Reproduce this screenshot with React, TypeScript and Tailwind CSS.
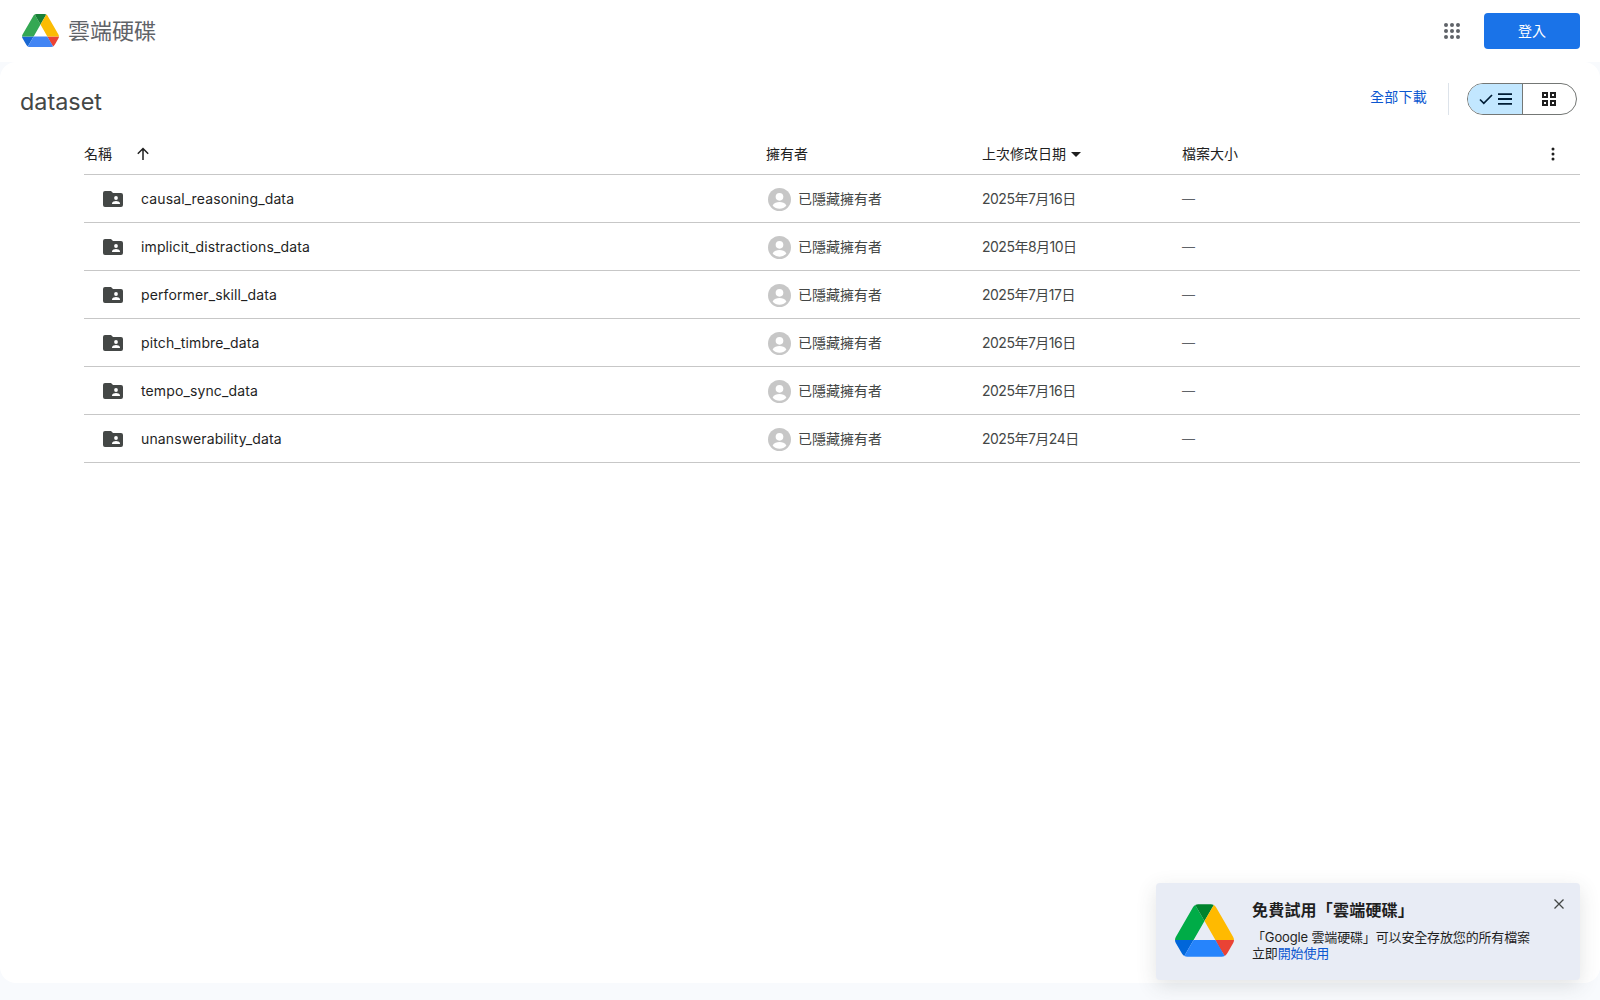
const rows = [
  { name: 'causal_reasoning_data', date: '2025年7月16日' },
  { name: 'implicit_distractions_data', date: '2025年8月10日' },
  { name: 'performer_skill_data', date: '2025年7月17日' },
  { name: 'pitch_timbre_data', date: '2025年7月16日' },
  { name: 'tempo_sync_data', date: '2025年7月16日' },
  { name: 'unanswerability_data', date: '2025年7月24日' },
];

const sans = "font-['Inter','Noto_Sans_CJK_TC',sans-serif]";

const DriveLogo = ({ className, vivid }: { className: string; vivid?: boolean }) => (
  <svg viewBox="0 0 87.3 78" className={className}>
    <path d="m6.6 66.85 3.85 6.65c.8 1.4 1.95 2.5 3.3 3.3l13.75-23.8h-27.5c0 1.55.4 3.1 1.2 4.5z" fill={vivid ? '#0066da' : '#1967d2'} />
    <path d="m43.65 25-13.75-23.8c-1.35.8-2.5 1.9-3.3 3.3l-25.4 44a9.06 9.06 0 0 0 -1.2 4.5h27.5z" fill={vivid ? '#00ac47' : '#34a853'} />
    <path d="m73.55 76.8c1.35-.8 2.5-1.9 3.3-3.3l1.6-2.75 7.65-13.25c.8-1.4 1.2-2.95 1.2-4.5h-27.502l5.852 11.5z" fill="#ea4335" />
    <path d="m43.65 25 13.75-23.8c-1.35-.8-2.9-1.2-4.5-1.2h-18.5c-1.6 0-3.15.45-4.5 1.2z" fill={vivid ? '#00832d' : '#188038'} />
    <path d="m59.8 53h-32.3l-13.75 23.8c1.35.8 2.9 1.2 4.5 1.2h50.8c1.6 0 3.15-.45 4.5-1.2z" fill={vivid ? '#2684fc' : '#4285f4'} />
    <path d="m73.4 26.5-12.7-22c-.8-1.4-1.95-2.5-3.3-3.3l-13.75 23.8 16.15 28h27.45c0-1.55-.4-3.1-1.2-4.5z" fill={vivid ? '#ffba00' : '#fbbc04'} />
  </svg>
);

const AppsIcon = () => (
  <svg viewBox="0 0 16 16" className="w-4 h-4" fill="#5f6368">
    {[2, 8, 14].map((y) =>
      [2, 8, 14].map((x) => <circle key={`${x}-${y}`} cx={x} cy={y} r="2" />)
    )}
  </svg>
);

const SharedFolder = () => (
  <svg viewBox="0 0 20 16" className="w-5 h-4">
    <path d="M2 0h6l2 2h8a2 2 0 0 1 2 2v10a2 2 0 0 1-2 2H2a2 2 0 0 1-2-2V2a2 2 0 0 1 2-2z" fill="#444746" />
    <circle cx="13" cy="7" r="1.9" fill="#fff" />
    <path d="M9 12.4c0-1.5 2.7-2.3 4-2.3s4 .8 4 2.3v.6H9z" fill="#fff" />
  </svg>
);

const Avatar = () => (
  <svg viewBox="0 0 24 24" className="w-[23px] h-[23px] mt-px">
    <circle cx="12" cy="12" r="12" fill="#c7c7c7" />
    <circle cx="12" cy="9.2" r="4" fill="#fff" />
    <path d="M4.8 18.2c1.5-2.4 4.3-3.5 7.2-3.5s5.7 1.1 7.2 3.5A9.6 9.6 0 0 1 12 21.6a9.6 9.6 0 0 1-7.2-3.4z" fill="#fff" />
  </svg>
);

const App = () => {
  return (
    <div className={`h-[1000px] flex flex-col bg-[#f8fafd] ${sans}`}>
      <header className="h-[62px] shrink-0 bg-white flex items-center pl-[22px] pr-5">
        <DriveLogo className="w-[37px] h-[33px] -mt-px" />
        <span className="ml-[9px] text-[22px] text-[#5f6368]">雲端硬碟</span>
        <div className="ml-auto mr-6">
          <AppsIcon />
        </div>
        <button className="w-24 h-9 rounded bg-[#1a73e8] text-white text-sm">登入</button>
      </header>

      <main className="h-[921px] bg-white rounded-2xl flex flex-col relative">
        <div className="h-[69px] shrink-0 flex items-center pl-5 pr-[23px] pt-1">
          <h1 className="text-[23.4px] text-[#444746] mt-[6px]">dataset</h1>
          <a className="ml-auto text-sm text-[#0b57d0] tracking-[0.25px] -mt-[3px]">全部下載</a>
          <div className="w-px h-8 bg-[#dde3ea] ml-[21px] mr-[18px]" />
          <div className="w-[110px] h-8 rounded-full border border-[#747775] flex overflow-hidden">
            <div className="w-[55px] bg-[#c2e7ff] border-r border-[#747775] flex items-center justify-center gap-[5px]">
              <svg viewBox="0 0 14 12" className="w-[14px] h-3" fill="none" stroke="#001d35" strokeWidth="1.7">
                <path d="M1 6.5l3.8 3.8L13 2" />
              </svg>
              <svg viewBox="0 0 14 12" className="w-[14px] h-3" fill="none" stroke="#001d35" strokeWidth="1.8">
                <path d="M0 1.2h14M0 6h14M0 10.8h14" />
              </svg>
            </div>
            <div className="flex-1 flex items-center justify-center pr-[2px]">
              <svg viewBox="0 0 14 14" className="w-[14px] h-[14px]" fill="none" stroke="#1f1f1f" strokeWidth="2">
                <rect x="1" y="1" width="4" height="4" />
                <rect x="9" y="1" width="4" height="4" />
                <rect x="1" y="9" width="4" height="4" />
                <rect x="9" y="9" width="4" height="4" />
              </svg>
            </div>
          </div>
        </div>

        <div className="ml-[84px] mr-5 mt-[1px]">
          <div className="h-[43px] pt-[2px] flex items-center text-sm text-[#1f1f1f] border-b border-[#c7c7c7]">
            <div className="w-[682px] flex items-center">
              <span>名稱</span>
              <svg viewBox="0 0 14 14" className="w-[14px] h-[14px] ml-6" fill="none" stroke="#1f1f1f" strokeWidth="1.5">
                <path d="M7 13V1.5M1.8 6.7 7 1.5l5.2 5.2" />
              </svg>
            </div>
            <div className="w-[216px]">擁有者</div>
            <div className="w-[200px] flex items-center">
              <span>上次修改日期</span>
              <span className="ml-[5px] w-0 h-0 border-x-[5px] border-x-transparent border-t-[5px] border-t-[#1f1f1f]" />
            </div>
            <div>檔案大小</div>
            <svg viewBox="0 0 4 14" className="ml-auto mr-[25px] w-[4px] h-[14px]" fill="#1f1f1f">
              <circle cx="2" cy="2" r="1.5" />
              <circle cx="2" cy="7" r="1.5" />
              <circle cx="2" cy="12" r="1.5" />
            </svg>
          </div>
          {rows.map((row) => (
            <div key={row.name} className="h-12 flex items-center text-sm border-b border-[#c7c7c7]">
              <div className="w-[683px] flex items-center pl-[19px]">
                <SharedFolder />
                <span className="ml-[18px] text-[#1f1f1f] tracking-[0.12px]">{row.name}</span>
              </div>
              <div className="w-[215px] flex items-center pl-[1px] text-[#444746]">
                <Avatar />
                <span className="ml-[7px]">已隱藏擁有者</span>
              </div>
              <div className="w-[200px] text-[#444746] tracking-[-0.5px]">{row.date}</div>
              <div className="text-[13px] text-[#5f6368] mt-px">—</div>
            </div>
          ))}
        </div>

        <div className="absolute right-5 bottom-[3px] w-[424px] h-[97px] rounded bg-[#e8ecf5] shadow-[0_6px_20px_rgba(60,64,67,0.15)] flex pl-[19px] pt-[21px]">
          <DriveLogo vivid className="w-[59px] h-[53px] shrink-0" />
          <div className="ml-[18px] -mt-[6px]">
            <div className="text-base font-bold text-[#1f1f1f] tracking-[0.2px]">免費試用「雲端硬碟」</div>
            <div className="mt-[7px] text-[13px] leading-4 text-[#1f1f1f] tracking-[-0.15px]">
              「Google 雲端硬碟」可以安全存放您的所有檔案
              <br />
              立即<a className="text-[#0b57d0]">開始使用</a>
            </div>
          </div>
          <svg viewBox="0 0 10 10" className="absolute right-[16px] top-[16px] w-[10px] h-[10px]" fill="none" stroke="#444746" strokeWidth="1.3">
            <path d="M.5.5l9 9M9.5.5l-9 9" />
          </svg>
        </div>
      </main>
    </div>
  );
};

export default App;
